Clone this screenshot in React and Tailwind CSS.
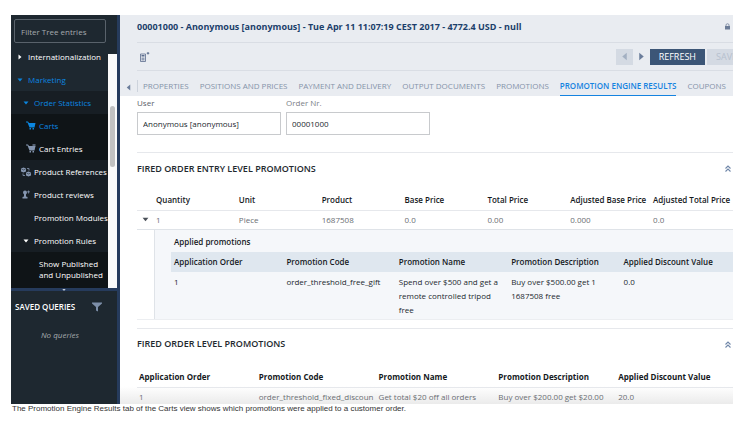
import React from "react";

const tabs = [
  "PROPERTIES",
  "POSITIONS AND PRICES",
  "PAYMENT AND DELIVERY",
  "OUTPUT DOCUMENTS",
  "PROMOTIONS",
  "PROMOTION ENGINE RESULTS",
  "COUPONS",
];

const entryColumns = [
  "Quantity",
  "Unit",
  "Product",
  "Base Price",
  "Total Price",
  "Adjusted Base Price",
  "Adjusted Total Price",
];
const entryRow = ["1", "Piece", "1687508", "0.0", "0.00", "0.000", "0.0"];

const promotionColumns = [
  "Application Order",
  "Promotion Code",
  "Promotion Name",
  "Promotion Description",
  "Applied Discount Value",
];
const appliedRow = [
  "1",
  "order_threshold_free_gift",
  "Spend over $500 and get a remote controlled tripod free",
  "Buy over $500.00 get 1 1687508 free",
  "0.0",
];
const orderRow = [
  "1",
  "order_threshold_fixed_discoun",
  "Get total $20 off all orders",
  "Buy over $200.00 get $20.00",
  "20.0",
];

function Triangle({ dir = "down", className = "" }) {
  const points = {
    down: "0.500,1.500 5.500,1.500 3,4.500",
    right: "1.500,0.500 4.500,3 1.500,5.500",
    left: "4.500,0.500 1.500,3 4.500,5.500",
  }[dir];
  return (
    <svg viewBox="0 0 6 6" className={`shrink-0 ${className}`} fill="currentColor" aria-hidden="true">
      <polygon points={points} />
    </svg>
  );
}

function CartIcon({ extra = false, className = "" }) {
  return (
    <svg viewBox="0 0 20 18" className={`h-[9px] w-[10px] shrink-0 ${className}`} fill="currentColor" aria-hidden="true">
      <path d="M0 1h4l2 3h13l-2 9H7L3 3H0z" />
      <path d="M7 14h3v3H7zM13 14h3v3h-3z" />
      {extra && <path d="M13 0h6v5h-6z" opacity="0.6" />}
    </svg>
  );
}

function ReferencesIcon() {
  return (
    <svg viewBox="0 0 20 20" className="h-[10px] w-[10px] shrink-0 text-[#8596b0]" aria-hidden="true">
      <path fill="currentColor" d="M0 3l5-2 5 2v6l-5 2-5-2z" />
      <path fill="currentColor" d="M10 11l5-2 5 2v6l-5 2-5-2z" />
      <path fill="none" stroke="currentColor" strokeWidth="1.600" d="M12 3h4v4M8 17H4v-4" />
      <path fill="none" stroke="#171e24" d="M1 4l4 2 4-2M11 12l4 2 4-2" />
    </svg>
  );
}

function ReviewIcon() {
  return (
    <svg viewBox="0 0 16 18" className="h-[9px] w-2 shrink-0 text-[#8596b0]" fill="currentColor" aria-hidden="true">
      <circle cx="6" cy="5" r="4" />
      <path d="M4 8h4v5l3 1v3H1v-3l3-1z" />
      <path d="M12 1h1.500v2H16v1.500h-2.500V7H12V4.500h-2V3h2z" />
    </svg>
  );
}

function TreeItem({ className, children }) {
  return (
    <li>
      <a href="#" className={`flex h-[23px] items-center whitespace-nowrap ${className}`}>
        {children}
      </a>
    </li>
  );
}

function Sidebar() {
  return (
    <aside className="flex w-[109px] shrink-0 border-r-[3px] border-[#263b5c] bg-[#1e2830] text-white">
      <div className="flex min-w-0 flex-1 flex-col">
        <div className="flex">
          <div className="w-[97px] shrink-0">
            <div className="pt-1 pr-[2px] pb-[2px] pl-[3px]">
              <input
                aria-label="Filter Tree entries"
                placeholder="Filter Tree entries"
                className="block h-6 w-full rounded-[2px] border border-[#59626b] bg-transparent px-[6px] placeholder:text-[#a5aaae]"
              />
            </div>
            <ul className="font-medium">
              <TreeItem className="gap-[5px] pl-[6px]">
                <Triangle dir="right" className="h-[6px] w-[6px]" />
                Internationalization
              </TreeItem>
              <TreeItem className="gap-[5px] pl-[6px] text-[#0b86e0]">
                <Triangle className="h-[6px] w-[6px]" />
                <span className="font-normal">Marketing</span>
              </TreeItem>
              <TreeItem className="gap-[5px] bg-[#171e24] pl-3 text-[#0b86e0]">
                <Triangle className="h-[6px] w-[6px]" />
                <span className="font-normal">Order Statistics</span>
              </TreeItem>
              <TreeItem className="gap-[3px] bg-[#0f1417] pl-[15px] text-[#0b86e0]">
                <CartIcon />
                <span className="font-normal">Carts</span>
              </TreeItem>
              <TreeItem className="gap-[3px] bg-[#0f1417] pl-[15px]">
                <CartIcon extra className="text-[#8596b0]" />
                Cart Entries
              </TreeItem>
              <TreeItem className="gap-[3px] bg-[#171e24] pl-[10px]">
                <ReferencesIcon />
                Product References
              </TreeItem>
              <TreeItem className="gap-1 bg-[#171e24] pl-[11px]">
                <ReviewIcon />
                Product reviews
              </TreeItem>
              <TreeItem className="bg-[#171e24] pl-[23px]">Promotion Modules</TreeItem>
              <TreeItem className="gap-[5px] bg-[#171e24] pl-3">
                <Triangle className="h-[6px] w-[6px]" />
                Promotion Rules
              </TreeItem>
              <li className="bg-[#0f1417] pt-[6px] pb-2 pl-7">
                <a href="#" className="block leading-[11px]">
                  Show Published and Unpublished
                </a>
              </li>
            </ul>
          </div>
          <div className="mt-[39px] flex-1 bg-[#fafafa] px-[2px] pt-[52px]">
            <div className="h-[61px] rounded-full bg-[#c1c1c1]" />
          </div>
        </div>
        <div className="flex h-[3px] items-center justify-center bg-[#263b5c]">
          <Triangle className="h-1 w-[6px] text-[#c5cedb]" />
        </div>
        <div className="flex items-center justify-between pt-[9px] pr-[15px] pl-1">
          <h2 className="font-semibold whitespace-nowrap">SAVED QUERIES</h2>
          <svg viewBox="0 0 20 20" className="h-[10px] w-[10px] text-[#7d8fa9]" fill="currentColor" aria-hidden="true">
            <path d="M0 1h20v2l-8 7v9l-4-2v-7L0 3z" />
          </svg>
        </div>
        <p className="pt-[14px] pr-2 text-center text-[#a5aaae] italic">No queries</p>
      </div>
    </aside>
  );
}

function SectionTitle({ children }) {
  return (
    <div className="flex h-8 items-center justify-between border-t border-[#e6e8ec] pr-[2px]">
      <h2 className="text-[9px] font-semibold text-[#22282e]">{children}</h2>
      <button aria-label="Collapse section" className="text-[#6f86a8]">
        <svg viewBox="0 0 12 14" className="h-[7px] w-[6px]" fill="none" stroke="currentColor" strokeWidth="2.200" aria-hidden="true">
          <path d="M1 7l5-5 5 5M1 13l5-5 5 5" />
        </svg>
      </button>
    </div>
  );
}

export default function App() {
  return (
    <div className="bg-white pt-[15px] pr-[14px] pl-[11px] font-['Open_Sans','Noto_Sans',sans-serif] text-[8px] leading-[14px]">
      <div className="flex">
        <Sidebar />
        <main className="min-w-0 flex-1 overflow-hidden bg-white text-[#22282e]">
          <header className="bg-[#e9ecf1]">
            <div className="ml-[17px] flex h-7 items-center justify-between border-b border-[#d9dde4] pr-[3px] pb-1">
              <h1 className="text-[9px] font-bold whitespace-nowrap text-[#1c3f6b]">
                00001000 - Anonymous [anonymous] - Tue Apr 11 11:07:19 CEST 2017 - 4772.4 USD - null
              </h1>
              <svg viewBox="0 0 10 12" className="h-[7px] w-[5px] text-[#6c7c97]" aria-hidden="true">
                <path fill="currentColor" d="M0 5h10v7H0z" />
                <path fill="none" stroke="currentColor" strokeWidth="1.500" d="M2 5V3a3 2.500 0 0 1 6 0v2" />
              </svg>
            </div>
            <div className="ml-[17px] flex h-7 items-center justify-between border-b border-[#d9dde4]">
              <button aria-label="Recalculate" className="pl-[3px] text-[#5a6c8d]">
                <svg viewBox="0 0 20 20" className="h-[10px] w-[10px]" aria-hidden="true">
                  <path fill="none" stroke="currentColor" strokeWidth="1.600" d="M1 4h10v15H1z" />
                  <path fill="currentColor" d="M3 6h6v3H3z" />
                  <path fill="currentColor" opacity="0.6" d="M3 11h6v6H3z" />
                  <path stroke="currentColor" strokeWidth="2" d="M16 0v5M13.500 2.500h5" />
                </svg>
              </button>
              <div className="-mr-[13px] flex h-4 items-stretch text-[9px]">
                <button aria-label="Previous" className="flex w-[17px] items-center justify-center bg-[#d4dae3] text-[#a3b0c2]">
                  <Triangle dir="left" className="h-[9px] w-[9px]" />
                </button>
                <button aria-label="Next" className="flex w-[17px] items-center justify-center text-[#6b7d9b]">
                  <Triangle dir="right" className="h-[9px] w-[9px]" />
                </button>
                <button className="bg-[#3c5677] px-[9px] text-white">REFRESH</button>
                <button className="ml-[2px] bg-[#d4dae3] px-[9px] text-[#b6c0ce]">SAVE</button>
              </div>
            </div>
            <div className="flex h-[25px] items-end">
              <button aria-label="Scroll tabs left" className="flex h-[18px] w-[17px] items-center pl-[5px] text-[#6b7d9b]">
                <Triangle dir="left" className="h-[7px] w-[7px]" />
              </button>
              <nav className="flex items-end gap-[11px] whitespace-nowrap">
                <span className="mb-1 -mr-[6px] h-3 border-l border-[#cdd3dc]" />
                {tabs.map((tab) =>
                  tab === "PROMOTION ENGINE RESULTS" ? (
                    <a key={tab} href="#" aria-current="page" className="h-[18px] border-b border-[#1583e0] pt-px font-semibold text-[#1583e0]">
                      {tab}
                    </a>
                  ) : (
                    <a key={tab} href="#" className="h-[18px] border-b border-transparent pt-px text-[#8593a9]">
                      {tab}
                    </a>
                  )
                )}
              </nav>
            </div>
          </header>

          <div className="pl-[17px]">
            <form className="flex gap-[5px] pb-[17px]">
              <label className="block w-36 text-[#5b6168]">
                <span className="block h-4">User</span>
                <input
                  defaultValue="Anonymous [anonymous]"
                  className="block h-[23px] w-full border border-[#c8cacd] px-[5px] text-[#22282e]"
                />
              </label>
              <label className="block w-36 text-[#7b8086]">
                <span className="block h-4">Order Nr.</span>
                <input
                  defaultValue="00001000"
                  className="block h-[23px] w-full border border-[#c8cacd] px-[5px] text-[#22282e]"
                />
              </label>
            </form>

            <SectionTitle>FIRED ORDER ENTRY LEVEL PROMOTIONS</SectionTitle>
            <table className="w-full table-fixed text-left whitespace-nowrap">
              <thead>
                <tr className="h-[26px] border-b border-[#e6e8ec] align-bottom text-[#15191d]">
                  <th className="w-[19px]" aria-label="Expand" />
                  {entryColumns.map((name) => (
                    <th key={name} className="w-[13.9%] p-0 pb-[3px] font-semibold last:w-auto">
                      {name}
                    </th>
                  ))}
                </tr>
              </thead>
              <tbody>
                <tr className="h-[19px] border-b border-[#dfe3e8] text-[#6a6e73]">
                  <td className="p-0">
                    <button aria-label="Collapse row" className="block pl-[5px] text-[#4a5058]">
                      <Triangle className="h-[7px] w-[7px]" />
                    </button>
                  </td>
                  {entryRow.map((value, i) => (
                    <td key={i} className="p-0">
                      {value}
                    </td>
                  ))}
                </tr>
              </tbody>
            </table>
            <div className="mb-2 border-b border-[#eceef1]">
              <div className="ml-[17px] border-l border-[#dfe3e8] bg-[#f5f7fa] pt-[5px] pb-[2px] pl-4">
                <h3 className="pb-[3px] pl-[3px] font-semibold text-[#15191d]">Applied promotions</h3>
                <table className="w-full table-fixed text-left">
                  <thead>
                    <tr className="h-5 bg-[#dfe7ef] text-[#15191d]">
                      {promotionColumns.map((name) => (
                        <th key={name} className="p-0 pl-[3px] font-semibold whitespace-nowrap">
                          {name}
                        </th>
                      ))}
                    </tr>
                  </thead>
                  <tbody>
                    <tr className="align-top">
                      {appliedRow.map((value, i) => (
                        <td key={i} className="px-[3px] pt-[3px] pb-0">
                          {value}
                        </td>
                      ))}
                    </tr>
                  </tbody>
                </table>
              </div>
            </div>

            <SectionTitle>FIRED ORDER LEVEL PROMOTIONS</SectionTitle>
          </div>
          <div className="bg-linear-to-b from-white from-60% to-[#ebebeb] pl-[17px]">
            <table className="w-full table-fixed text-left whitespace-nowrap">
              <thead>
                <tr className="h-[28px] border-b border-[#e6e8ec] align-bottom text-[#15191d]">
                  {promotionColumns.map((name) => (
                    <th key={name} className="w-[20.1%] p-0 pb-[3px] pl-[2px] font-bold last:w-auto">
                      {name}
                    </th>
                  ))}
                </tr>
              </thead>
              <tbody>
                <tr className="text-[#6a6e73]">
                  {orderRow.map((value, i) => (
                    <td key={i} className="p-0 pt-[2px] pl-[2px]">
                      {value}
                    </td>
                  ))}
                </tr>
              </tbody>
            </table>
          </div>
        </main>
      </div>
      <p className="pl-px font-['Liberation_Sans',Arial,sans-serif] text-[8px] leading-[10px] text-[#333333]">
        The Promotion Engine Results tab of the Carts view shows which promotions were applied to a customer order.
      </p>
    </div>
  );
}
